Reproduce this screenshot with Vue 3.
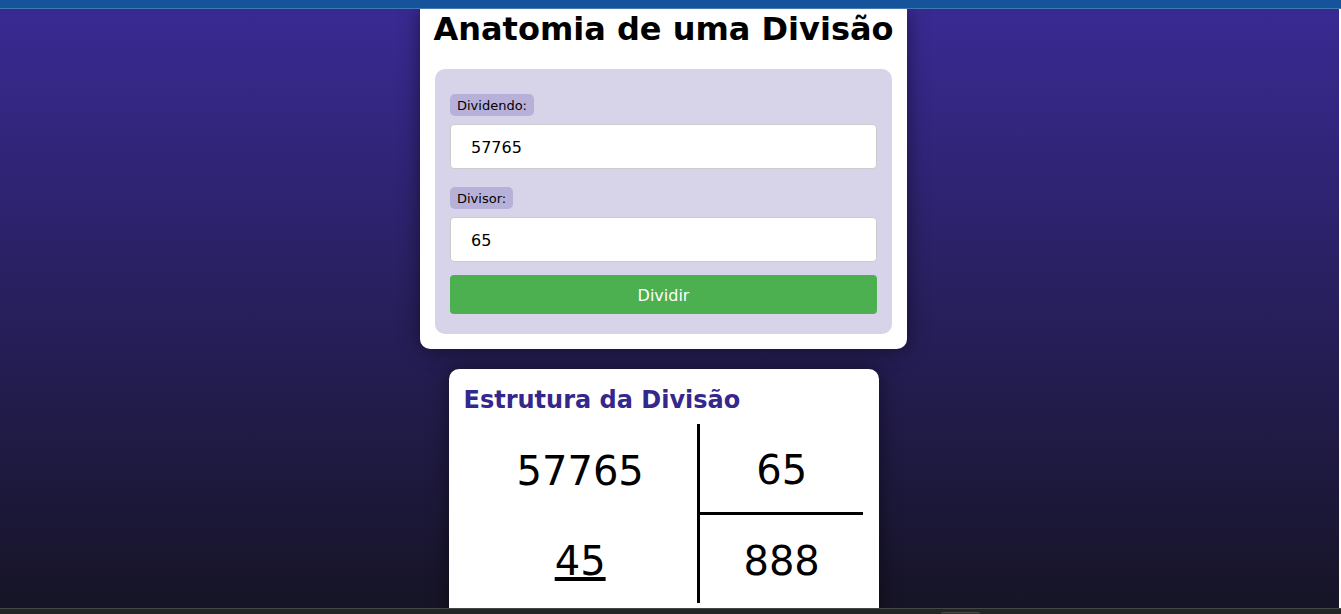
<script setup>
import { ref } from 'vue'

const dividend = ref('57765')
const divisor = ref('65')
const result = ref({ dividend: '57765', divisor: '65', quotient: '888', remainder: '45' })

function divide() {
  const a = parseInt(dividend.value, 10)
  const b = parseInt(divisor.value, 10)
  if (!b || Number.isNaN(a)) return
  result.value = {
    dividend: String(a),
    divisor: String(b),
    quotient: String(Math.floor(a / b)),
    remainder: String(a % b)
  }
}
</script>

<template>
  <div class="screen">
    <header class="topbar"></header>
    <main class="page">
      <section class="card intro">
        <h1>Anatomia de uma Divisão</h1>
        <form class="panel" @submit.prevent="divide">
          <label for="dividend">Dividendo:</label>
          <input id="dividend" v-model="dividend" type="text" inputmode="numeric">
          <label for="divisor">Divisor:</label>
          <input id="divisor" v-model="divisor" type="text" inputmode="numeric">
          <button type="submit">Dividir</button>
        </form>
      </section>
      <section class="card structure">
        <h2>Estrutura da Divisão</h2>
        <div class="division">
          <div class="cell">{{ result.dividend }}</div>
          <div class="cell side divisor">{{ result.divisor }}</div>
          <div class="cell"><span class="remainder">{{ result.remainder }}</span></div>
          <div class="cell side">{{ result.quotient }}</div>
        </div>
      </section>
    </main>
    <footer class="taskbar"><span class="tab"></span></footer>
  </div>
</template>

<style>
body {
  margin: 0;
  background: #fff;
}
</style>

<style scoped>
.screen {
  display: flex;
  flex-direction: column;
  height: 100vh;
  overflow: hidden;
  font-family: "DejaVu Sans", Verdana, sans-serif;
  color: #000;
}

.topbar {
  flex: none;
  height: 8px;
  background: #15549a;
  border-bottom: 1px solid #4378b0;
}

.page {
  flex: 1;
  min-height: 0;
  overflow: hidden;
  display: flex;
  flex-direction: column;
  align-items: center;
  gap: 20px;
  margin-right: 2px;
  padding-right: 12px;
  background: linear-gradient(#392a93, #161426);
}

.card {
  flex: none;
  box-sizing: border-box;
  max-width: 100%;
  padding: 15px;
  background: #fff;
  border-radius: 10px;
  box-shadow: 0 0 20px rgba(0, 0, 0, 0.5);
}

.intro {
  width: 487px;
  padding-top: 0;
  border-radius: 0 0 10px 10px;
}

h1 {
  margin: 0 -15px 20px;
  font-size: 32px;
  line-height: 40px;
  text-align: center;
}

.panel {
  display: flex;
  flex-direction: column;
  align-items: flex-start;
  padding: 25px 15px 20px;
  background: #d7d3e9;
  border-radius: 10px;
}

label {
  box-sizing: border-box;
  height: 22px;
  padding: 0 7px;
  font-size: 13px;
  line-height: 24px;
  background: #b7b1d9;
  border-radius: 5px;
}

input {
  box-sizing: border-box;
  width: 100%;
  height: 45px;
  margin: 8px 0 18px;
  padding: 2px 20px 0;
  font: inherit;
  font-size: 16px;
  color: #000;
  background: #fff;
  border: 1px solid #ccc;
  border-radius: 4px;
}

#divisor {
  margin-bottom: 13px;
}

button {
  width: 100%;
  height: 39px;
  padding: 2px 0 0;
  font: inherit;
  font-size: 16px;
  color: #fff;
  background: #4caf50;
  border: none;
  border-radius: 4px;
  cursor: pointer;
}

.structure {
  width: 430px;
}

h2 {
  margin: 0 0 8px;
  font-size: 24px;
  line-height: 32px;
  color: #36278c;
}

.division {
  display: grid;
  grid-template-columns: 7fr 5fr;
  font-size: 40px;
}

.cell {
  display: flex;
  align-items: center;
  justify-content: center;
  min-height: 85px;
  padding-top: 3px;
}

.side {
  border-left: 3px solid #000;
}

.divisor {
  border-bottom: 3px solid #000;
}

.remainder {
  text-decoration: underline;
  text-decoration-thickness: 4px;
  text-underline-offset: 2px;
}

.taskbar {
  flex: none;
  display: flex;
  height: 5px;
  background: #222625;
  border-top: 1px solid #454746;
}

.tab {
  width: 39px;
  margin: 3px 0 0 70.2%;
  background: #303332;
  border-top: 1px solid #454746;
  border-radius: 4px 4px 0 0;
}
</style>
